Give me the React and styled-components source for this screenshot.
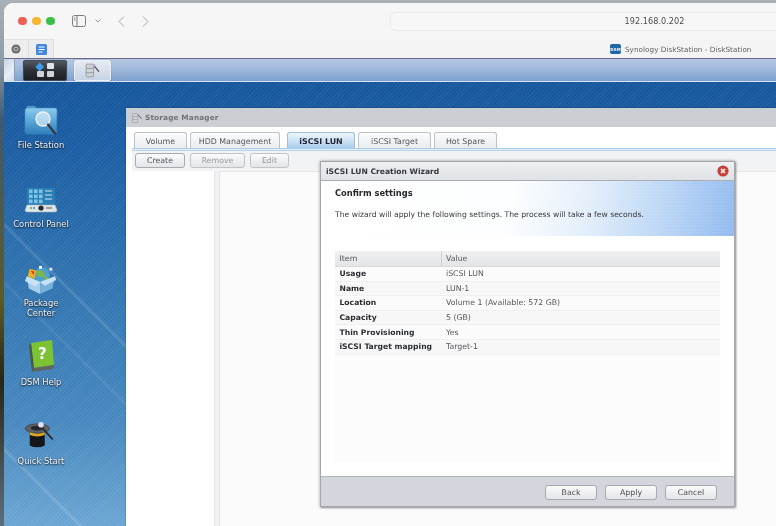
import React from "react";
import styled, { createGlobalStyle } from "styled-components";

const Global = createGlobalStyle`
  html, body { margin: 0; padding: 0; width: 776px; height: 526px; overflow: hidden; background: #5a6a72; }
  * { box-sizing: border-box; }
  #root { width: 776px; height: 526px; }
`;

const Screen = styled.div`
  width: 776px; height: 526px; overflow: hidden; padding: 3px 0 0 4px;
  font-family: "DejaVu Sans", Verdana, sans-serif; color: #444;
  filter: blur(0.35px);
  background: linear-gradient(180deg, #a9b0b6 0, #8e9ba6 60px, #3c5a76 120px, #5b5a2a 300px, #262618 380px, #5b6f80 526px);
`;
const Browser = styled.div`
  width: 772px; height: 523px; border-top-left-radius: 9px; overflow: hidden;
  display: flex; flex-direction: column; background: #f6f6f6;
`;
const TopBar = styled.div`
  height: 36px; flex: none; display: flex; align-items: center; padding: 0 0 0 14px; background: #f6f6f6;
`;
const Lights = styled.div`display: flex; gap: 5.5px; margin-right: 17px;`;
const Light = styled.span`
  width: 8.5px; height: 8.5px; border-radius: 50%; background: ${p => p.$c};
`;
const BarIcon = styled.svg`flex: none; display: block; margin-right: ${p => p.$mr || 0}px;`;
const Address = styled.div`
  flex: none; width: 385px; height: 19px; margin-left: 241px; border: 1px solid #ebebeb; border-radius: 6px 0 0 6px; border-right: 0;
  background: #f7f7f7; display: flex; align-items: center; justify-content: center;
  font-size: 8.1px; color: #4c4c4c; padding-left: 144px; letter-spacing: .05px;
`;
const TabStrip = styled.div`
  height: 19px; flex: none; display: flex; background: #f4f4f4; align-items: stretch;
`;
const PinTab = styled.div`
  width: 25px; background: #ededed; border-right: 1px solid #dcdcdc; border-top: 1px solid #e2e2e2; display: flex; align-items: center; justify-content: center;
`;
const PageTab = styled.div`
  margin-left: auto; width: 166px; display: flex; align-items: center; gap: 4px; font-size: 7.2px; color: #5e5e5e; letter-spacing: .06px; padding-top: 1px; white-space: nowrap;
`;
const Fav = styled.span`
  width: 11px; height: 10px; border-radius: 2px; background: #1d68a8; color: #fff; font-size: 4px; font-weight: 700; flex: none;
  display: flex; align-items: center; justify-content: center;
`;
const TaskBar = styled.div`
  height: 24px; flex: none; display: flex; align-items: center; border-top: 1px solid #6f6a8c;
  background: linear-gradient(180deg, #b4c8e2 0, #a0b9dc 45%, #7da0cd 100%);
  border-bottom: 1px solid #d6e4f2;
`;
const Grip = styled.div`
  width: 11px; height: 100%; margin-right: 8px; background: linear-gradient(135deg, #c5d3e4, #e8eef6 60%, #cfdaea);
  border-right: 1px solid #8ca0bd;
`;
const TaskBtn = styled.div`
  height: 21px; width: ${p => p.$w}px; margin-right: 7px; border-radius: 2px; display: flex; align-items: center; justify-content: center;
  background: ${p => p.$dark ? "linear-gradient(180deg,#535960 0,#2b3036 50%,#1c2025 100%)" : "linear-gradient(180deg,#e6ebf3,#c7d3e6)"};
  border: 1px solid ${p => p.$dark ? "#3c4a5c" : "#eef2f8"};
  box-shadow: 0 0 1px #40577a;
`;
const Desktop = styled.div`
  flex: 1; position: relative; overflow: hidden;
  background:
    repeating-linear-gradient(135deg, rgba(255,255,255,.04) 0 1px, rgba(0,0,0,.015) 1px 3px),
    linear-gradient(45deg, transparent 52px, rgba(255,255,255,.16) 54px, transparent 57px),
    linear-gradient(45deg, transparent 170px, rgba(255,255,255,.08) 172px, transparent 175px),
    linear-gradient(45deg, transparent 211px, rgba(255,255,255,.14) 213px, transparent 216px),
    linear-gradient(180deg, #17599f 0, #1d5fa6 60px, #2f73b0 180px, #4a8bc2 340px, #6ea8d5 444px);
`;
const IconColumn = styled.div`
  width: 74px; display: flex; flex-direction: column; align-items: center; padding-top: 20px;
`;
const DeskItem = styled.div`
  width: 74px; height: 79px; flex: none; display: flex; flex-direction: column; align-items: center;
`;
const IconSlot = styled.div`
  height: 39px; flex: none; display: flex; align-items: flex-end; justify-content: center; padding-bottom: ${p => p.$pb}px;
  svg { display: block; }
`;
const DeskLabel = styled.div`
  width: 74px; text-align: center; color: #f7f9fb; font-size: 8.4px; line-height: 9.7px; text-shadow: 0 1px 2px rgba(0,0,0,.85), 0 0 1px rgba(0,0,0,.5);
`;
const AppWin = styled.div`
  position: absolute; left: 122px; top: 26px; width: 660px; height: 430px; background: #fafafa;
  border-radius: 3px 0 0 0; box-shadow: 0 0 2px rgba(0,0,0,.4); display: flex; flex-direction: column;
`;
const AppTitle = styled.div`
  height: 19px; flex: none; display: flex; align-items: center; gap: 2px; padding-left: 5px;
  background: #cbcfd4; font-weight: 700; font-size: 7.3px; color: #6e7277; letter-spacing: .17px;
`;
const AppBody = styled.div`
  flex: 1; display: flex; flex-direction: column; padding: 5px 0 0 6px; background: #fff;
`;
const Tabs = styled.div`display: flex; gap: 3px; padding-left: 2px; height: 16px; flex: none;`;
const Tab = styled.div`
  width: ${p => p.$w}px; margin-left: ${p => p.$ml || 0}px; border: 1px solid ${p => p.$on ? "#9cc0de" : "#bcc2c8"}; border-bottom: 0; border-radius: 3px 3px 0 0;
  display: flex; align-items: center; justify-content: center; font-size: 7.9px; padding-top: 1px;
  color: ${p => p.$on ? "#1f2230" : "#53575c"}; font-weight: ${p => p.$on ? 700 : 400};
  background: ${p => p.$on ? "linear-gradient(180deg,#f0f6fc,#a9cdee)" : "linear-gradient(180deg,#fbfcfd,#e9ecf0)"};
`;
const Panel = styled.div`
  flex: 1; display: flex; flex-direction: column; border-top: 1px solid #a9cbe4; background: #f0f2f4; box-shadow: inset 0 1px 0 #e4eff7, inset 0 2px 0 #b6d3e8; padding-top: 4px;
`;
const ToolRow = styled.div`
  height: 18px; flex: none; display: flex; gap: 5px; align-items: flex-start; padding-left: 3px; background: #f2f3f5;
`;
const Btn = styled.div`
  width: ${p => p.$w}px; height: 15px; border: 1px solid ${p => p.$off ? "#c0c4c8" : "#a6abb1"}; border-radius: 3px;
  display: flex; align-items: center; justify-content: center; font-size: 7.8px;
  color: ${p => p.$off ? "#94979b" : "#4c4f53"};
  background: linear-gradient(180deg,#fbfbfc,#e3e5e8);
`;
const Split = styled.div`flex: 1; display: flex; gap: 4px; background: #f0f2f4;`;
const Tree = styled.div`width: 83px; background: #fff; border-right: 1px solid #e3e3e3;`;
const Main = styled.div`flex: 1; background: #fbfbfb; border-left: 1px solid #e4e4e4; border-top: 1px solid #e6e6e6;`;
const Dialog = styled.div`
  position: absolute; left: 316px; top: 79px; width: 415px; height: 346px; display: flex; flex-direction: column;
  background: #d2d6dc; border: 1px solid #a3a6aa; box-shadow: 0 0 3px rgba(0,0,0,.35), 1px 1px 2px rgba(0,0,0,.3);
`;
const DlgTitle = styled.div`
  height: 19px; flex: none; display: flex; align-items: center; justify-content: space-between; padding: 0 5px;
  background: linear-gradient(180deg,#eef0f2,#dfe2e6); border-bottom: 1px solid #a9adb2; font-size: 7.6px; font-weight: 700; color: #34383e;
`;
const Banner = styled.div`
  height: 55px; flex: none; padding: 7px 14px 0; display: flex; flex-direction: column; background:
    repeating-linear-gradient(180deg, rgba(255,255,255,.06) 0 1px, transparent 1px 3px),
    linear-gradient(100deg, #fff 0, #fdfeff 45%, #e6f0fb 63%, #bdd7f6 82%, #93bbef 100%);
`;
const BannerHead = styled.div`font-size: 8.3px; line-height: 11px; font-weight: 700; color: #26282c;`;
const BannerText = styled.div`margin-top: 11px; font-size: 7.65px; line-height: 10px; color: #3a3a3a;`;
const Content = styled.div`
  flex: 1; background: #fff; padding: 15px 14px 14px; display: flex;
`;
const Grid = styled.div`flex: 1; background: #fff; display: flex; flex-direction: column;`;
const Row = styled.div`
  height: ${p => p.$head ? 16 : 14.6}px; flex: none; display: flex; align-items: center; font-size: 7.8px;
  background: ${p => p.$head ? "linear-gradient(180deg,#eef0f1,#e3e5e7)" : p.$alt ? "#f7f7f7" : "#fbfbfb"};
  border-bottom: 1px solid ${p => p.$head ? "#d8dadc" : "#f0f0f0"};
`;
const CellA = styled.div`
  width: 107px; padding-left: 4.5px; height: 100%; display: flex; align-items: center; flex: none;
  font-weight: ${p => p.$b ? 700 : 400}; font-size: ${p => p.$b ? 7.65 : 7.8}px; color: ${p => p.$b ? "#2b2e32" : "#4e5155"}; white-space: nowrap;
  border-right: ${p => p.$head ? "1px solid #cfd1d3" : "0"};
`;
const CellB = styled.div`padding-left: 4px; color: #54575b; white-space: nowrap;`;
const Rest = styled.div`flex: 1; background: #fcfcfc;`;
const Footer = styled.div`
  height: 30px; flex: none; border-top: 1px solid #b3b6ba; background: #d3d7dd; display: flex; justify-content: flex-end; gap: 8px; padding: 8px 17px 0 0;
`;

const FolderIcon = () => (
  <svg width="34" height="31" viewBox="0 0 34 31">
    <defs><linearGradient id="fo" x1="0" y1="0" x2="0" y2="1"><stop offset="0" stopColor="#8ccaec" /><stop offset=".5" stopColor="#5aa6d8" /><stop offset="1" stopColor="#2f7fb8" /></linearGradient></defs>
    <path d="M3 1h8l2 3H3z" fill="#4f9ccd" />
    <path d="M1 6q0-3 2-3h28q2 0 2 3l-.5 21q0 2-2 2H3q-2 0-2-2z" fill="url(#fo)" stroke="#3f8fc4" strokeWidth=".5" />
    <circle cx="19" cy="14" r="7" fill="#d8ecf7" fillOpacity=".7" stroke="#eef2f5" strokeWidth="1.4" />
    <path d="M24 19.500l7 9" stroke="#34373e" strokeWidth="2.200" strokeLinecap="round" />
  </svg>
);
const PanelIcon = () => (
  <svg width="34" height="26" viewBox="0 0 34 26">
    <rect x="3" y="1" width="28" height="17" fill="#2a7fb4" />
    {[4, 9, 14].map(x => [3, 8, 13].map(y => <rect key={x + "-" + y} x={x + 1} y={y - 0.5} width="3.600" height="3.600" fill="#7cc3e6" />))}
    <path d="M21 4h7M21 8h7M21 12h7" stroke="#cfe6f2" strokeWidth="1" />
    <path d="M3 18h28l2 5q0 2-2 2H3q-2 0-2-2z" fill="#dfe4e8" stroke="#aab2b8" strokeWidth=".5" />
    <circle cx="17" cy="21" r="2.600" fill="#25282c" />
    <rect x="6" y="20" width="2" height="2" fill="#6cc06c" /><rect x="9" y="20" width="2" height="2" fill="#5a9ad0" />
    <path d="M22 21h6" stroke="#555" strokeWidth="1" />
  </svg>
);
const PackageIcon = () => (
  <svg width="32" height="32" viewBox="0 0 34 32">
    <path d="M2 12l15 6 15-6-15-6z" fill="#3d6f9f" />
    <circle cx="18" cy="11" r="8.500" fill="#4da0d0" />
    <path d="M12 7q5-3 8 1t-2 5-6-6zM20 13q4-1 5 1l-3 4z" fill="#7eb648" />
    <path d="M5 4l7 2-2 9-7-3z" fill="#efb21e" /><path d="M6 6l4 1-1 4z" fill="#d8431f" />
    <rect x="15" y="1" width="3" height="3" fill="#fff" /><rect x="26" y="3" width="3" height="3" fill="#f3e6e6" />
    <path d="M2 12l14 6v13L4 25z" fill="#a5cfec" />
    <path d="M32 12l-16 6v13l13-6z" fill="#78b0dc" />
    <path d="M2 12l14 6-5 5L0 17zM32 12l-16 6 5 4 12-6z" fill="#c6e2f4" />
  </svg>
);
const HelpIcon = () => (
  <svg width="28" height="33" viewBox="0 0 28 33">
    <path d="M4 3L25 0l2 25-20 3z" fill="#7cc232" />
    <path d="M4 3l3 25-2 4-3-26z" fill="#4e5a40" />
    <path d="M5 32l21-3 1-4-20 3z" fill="#5f6660" />
    <text x="11" y="19" fontSize="15" fontWeight="700" fill="#fff" fontFamily="DejaVu Sans">?</text>
  </svg>
);
const HatIcon = () => (
  <svg width="34" height="30" viewBox="0 0 36 32">
    <ellipse cx="14" cy="8" rx="13" ry="5" fill="#5b6066" stroke="#33363b" strokeWidth=".6" />
    <ellipse cx="14" cy="7.500" rx="7" ry="2.500" fill="#23262a" />
    <path d="M6 12q8 3 16 0v14q-8 4-16 0z" fill="#14161a" />
    <path d="M6 12q8 3 16 0v3q-8 3-16 0z" fill="#e0a61c" />
    <path d="M17 5l13 14" stroke="#2a2c30" strokeWidth="2" strokeLinecap="round" />
    <circle cx="18" cy="4" r="3" fill="#e6dcf5" />
  </svg>
);
const GridMark = () => (
  <svg width="26" height="18" viewBox="0 0 26 18">
    <path d="M7 1l4 4-4 4-4-4z" fill="#3f9be6" transform="translate(0 .5) scale(1.1)" />
    <rect x="15" y="2" width="7" height="6" rx="1" fill="#e0e4e8" />
    <rect x="5" y="10" width="7" height="6" rx="1" fill="#cfd3d8" />
    <rect x="15" y="10" width="7" height="6" rx="1" fill="#cfd3d8" />
  </svg>
);
const StorageMark = ({ s = 16 }) => (
  <svg width={s} height={s} viewBox="0 0 16 16">
    <rect x="2" y="2" width="7" height="12" rx="1" fill="#cfd2d6" stroke="#8a8d92" strokeWidth=".7" />
    <path d="M2 6h7M2 10h7" stroke="#8a8d92" strokeWidth=".7" />
    <path d="M9 3l5 6" stroke="#444" strokeWidth="1.100" />
    <circle cx="9.500" cy="3" r="1.200" fill="#c9a5e8" />
  </svg>
);
const CloseIcon = () => (
  <svg width="12" height="12" viewBox="0 0 12 12">
    <circle cx="6" cy="6" r="5.600" fill="#c53f3a" />
    <path d="M4 4l4 4M8 4l-4 4" stroke="#f6dcd9" strokeWidth="1.800" />
  </svg>
);

const rows = [
  ["Usage", "iSCSI LUN"], ["Name", "LUN-1"], ["Location", "Volume 1 (Available: 572 GB)"],
  ["Capacity", "5 (GB)"], ["Thin Provisioning", "Yes"], ["iSCSI Target mapping", "Target-1"],
];
const desk = [
  { I: FolderIcon, l: "File Station", pb: 5 },
  { I: PanelIcon, l: "Control Panel", pb: 7 },
  { I: PackageIcon, l: <>Package<br />Center</>, pb: 3 },
  { I: HelpIcon, l: "DSM Help", pb: 5 },
  { I: HatIcon, l: "Quick Start", pb: 6 },
];

export default function App() {
  return (
    <Screen>
      <Global />
      <Browser>
        <TopBar>
          <Lights>
            <Light $c="#ee5f57" /><Light $c="#f6b52d" /><Light $c="#3ac14a" />
          </Lights>
          <BarIcon $mr={9} width="14" height="12" viewBox="0 0 14 12" fill="none" stroke="#7d7d7d" strokeWidth="1">
            <rect x=".5" y=".5" width="13" height="11" rx="2" /><path d="M5 .5v11" /><path d="M2 3h1.500M2 5h1.500" />
          </BarIcon>
          <BarIcon $mr={17} width="6" height="4" viewBox="0 0 6 4" fill="none" stroke="#999" strokeWidth="1"><path d="M.5.5L3 3 5.500.5" /></BarIcon>
          <BarIcon $mr={17} width="7" height="11" viewBox="0 0 7 11" fill="none" stroke="#a5a5a5" strokeWidth="1"><path d="M6 .5L1 5.500l5 5" /></BarIcon>
          <BarIcon width="7" height="11" viewBox="0 0 7 11" fill="none" stroke="#a5a5a5" strokeWidth="1"><path d="M1 .5l5 5-5 5" /></BarIcon>
          <Address>192.168.0.202</Address>
        </TopBar>
        <TabStrip>
          <PinTab>
            <svg width="10" height="10" viewBox="0 0 10 10"><circle cx="5" cy="5" r="4.500" fill="#6a6a6a" /><circle cx="5" cy="5" r="2" fill="none" stroke="#ddd" strokeWidth=".8" /></svg>
          </PinTab>
          <PinTab>
            <svg width="11" height="11" viewBox="0 0 11 11"><rect width="11" height="11" rx="1.500" fill="#3f86e0" /><path d="M2.500 3h6M2.500 5.500h6M2.500 8h4" stroke="#fff" strokeWidth="1.100" /></svg>
          </PinTab>
          <PageTab><Fav>DSM</Fav>Synology DiskStation - DiskStation</PageTab>
        </TabStrip>
        <TaskBar>
          <Grip />
          <TaskBtn $dark $w={44}><GridMark /></TaskBtn>
          <TaskBtn $w={37}><StorageMark s={17} /></TaskBtn>
        </TaskBar>
        <Desktop>
          <IconColumn>
            {desk.map(({ I, l, pb }, i) => (
              <DeskItem key={i}><IconSlot $pb={pb}><I /></IconSlot><DeskLabel>{l}</DeskLabel></DeskItem>
            ))}
          </IconColumn>
          <AppWin>
            <AppTitle><StorageMark s={12} />Storage Manager</AppTitle>
            <AppBody>
              <Tabs>
                <Tab $w={53}>Volume</Tab>
                <Tab $w={90}>HDD Management</Tab>
                <Tab $w={68} $ml={4} $on>iSCSI LUN</Tab>
                <Tab $w={73}>iSCSI Target</Tab>
                <Tab $w={63}>Hot Spare</Tab>
              </Tabs>
              <Panel>
                <ToolRow>
                  <Btn $w={50}>Create</Btn>
                  <Btn $w={55} $off>Remove</Btn>
                  <Btn $w={39} $off>Edit</Btn>
                </ToolRow>
                <Split><Tree /><Main /></Split>
              </Panel>
            </AppBody>
          </AppWin>
          <Dialog>
            <DlgTitle>iSCSI LUN Creation Wizard<CloseIcon /></DlgTitle>
            <Banner>
              <BannerHead>Confirm settings</BannerHead>
              <BannerText>The wizard will apply the following settings. The process will take a few seconds.</BannerText>
            </Banner>
            <Content>
              <Grid>
                <Row $head><CellA $head>Item</CellA><CellB>Value</CellB></Row>
                {rows.map(([a, b], i) => (
                  <Row key={a} $alt={i % 2 === 1}><CellA $b>{a}</CellA><CellB>{b}</CellB></Row>
                ))}
                <Rest />
              </Grid>
            </Content>
            <Footer>
              <Btn $w={52}>Back</Btn>
              <Btn $w={52}>Apply</Btn>
              <Btn $w={52}>Cancel</Btn>
            </Footer>
          </Dialog>
        </Desktop>
      </Browser>
    </Screen>
  );
}
